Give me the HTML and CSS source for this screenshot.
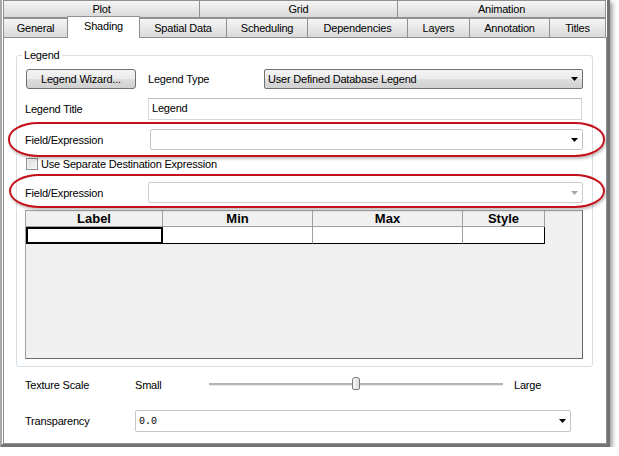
FILE: index.html
```html
<!DOCTYPE html>
<html>
<head>
<meta charset="utf-8">
<link rel="stylesheet" href="styles.css">
</head>
<body>
<div class="window">
  <div class="tabrow tabrow-top">
    <div class="tab w-plot">Plot</div>
    <div class="tab w-grid">Grid</div>
    <div class="tab w-anim">Animation</div>
  </div>
  <div class="tabrow tabrow-bottom">
    <div class="tab w-general">General</div>
    <div class="tab tab-active w-shading">Shading</div>
    <div class="tab w-spatial">Spatial Data</div>
    <div class="tab w-sched">Scheduling</div>
    <div class="tab w-dep">Dependencies</div>
    <div class="tab w-layers">Layers</div>
    <div class="tab w-annot">Annotation</div>
    <div class="tab w-titles">Titles</div>
  </div>
  <div class="panel">
    <fieldset class="group">
      <legend class="group-title">Legend</legend>
      <div class="row row-a">
        <div class="btn">Legend Wizard...</div>
        <span class="lbl-type">Legend Type</span>
        <div class="combo combo-raised"><span class="combo-text">User Defined Database Legend</span><svg class="arrow" width="7" height="4" viewBox="0 0 7 4"><path d="M0 0H7L3.5 4Z" fill="#000"/></svg></div>
      </div>
      <div class="row row-b">
        <span class="lbl lbl-123">Legend Title</span>
        <div class="textbox">Legend</div>
      </div>
      <div class="row row-c">
        <span class="lbl lbl-125">Field/Expression</span>
        <div class="combo combo-flat"><span class="combo-text"></span><svg class="arrow" width="7" height="4" viewBox="0 0 7 4"><path d="M0 0H7L3.5 4Z" fill="#000"/></svg></div>
      </div>
      <div class="row row-d">
        <span class="checkbox"></span>
        <span class="check-text">Use Separate Destination Expression</span>
      </div>
      <div class="row row-e">
        <span class="lbl lbl-123">Field/Expression</span>
        <div class="combo combo-flat combo-disabled"><span class="combo-text"></span><svg class="arrow" width="7" height="4" viewBox="0 0 7 4"><path d="M0 0H7L3.5 4Z" fill="#a6a6a6"/></svg></div>
      </div>
      <div class="grid">
        <div class="ghead">
          <div class="hcell">Label</div>
          <div class="hcell">Min</div>
          <div class="hcell">Max</div>
          <div class="hcell">Style</div>
        </div>
        <div class="grow">
          <div class="cell cell-focus"></div>
          <div class="cell"></div>
          <div class="cell"></div>
          <div class="cell cell-last"></div>
        </div>
      </div>
    </fieldset>

    <div class="row tex-row">
      <span class="lbl lbl-110">Texture Scale</span>
      <span class="small-lbl">Small</span>
      <div class="slider"><span class="thumb"></span></div>
      <span class="large-lbl">Large</span>
    </div>

    <div class="row trans-row">
      <span class="lbl lbl-110">Transparency</span>
      <div class="combo combo-flat combo-trans"><span class="combo-text mono">0.0</span><svg class="arrow" width="7" height="4" viewBox="0 0 7 4"><path d="M0 0H7L3.5 4Z" fill="#000"/></svg></div>
    </div>

    <div class="callout callout-1"></div>
    <div class="callout callout-2"></div>
  </div>
</div>
</body>
</html>
```

FILE: styles.css
```css
html, body {
  margin: 0;
  padding: 0;
  background: #ffffff;
}

body {
  font-family: "Liberation Sans", Arial, sans-serif;
  font-size: 11px;
  letter-spacing: -0.2px;
  color: #000;
}

.window {
  width: 604px;
  height: 444px;
  border-left: 2px solid #a8a8a8;
  padding-left: 1px;
  border-right: 3px solid #737373;
  border-bottom: 3px solid #737373;
  box-shadow: 2px 2px 5px rgba(0, 0, 0, 0.45);
  background: #fff;
}

.tabrow {
  display: flex;
  align-items: flex-start;
}

.tabrow-top {
  height: 18px;
}

.tabrow-bottom {
  height: 19px;
}

.tab {
  box-sizing: border-box;
  flex: none;
  margin-right: -1px;
  border: 1px solid #8e9093;
  background: linear-gradient(#f6f6f6, #e6e6e6 55%, #d9d9d9);
  text-align: center;
  white-space: nowrap;
}

.tabrow-top .tab {
  height: 18px;
  line-height: 16px;
}

.tabrow-bottom .tab {
  height: 19px;
  border-bottom: none;
  line-height: 18px;
}

.tabrow-bottom .tab-active {
  position: relative;
  z-index: 2;
  height: 22px;
  margin-top: -2px;
  margin-bottom: -1px;
  background: #fff;
  line-height: 18px;
}

.w-plot { width: 197px; }
.w-grid { width: 199px; }
.w-anim { width: 209px; }
.w-general { width: 65px; }
.w-shading { width: 73px; }
.w-spatial { width: 88px; }
.w-sched { width: 82px; }
.w-dep { width: 101px; }
.w-layers { width: 63px; }
.w-annot { width: 81px; }
.w-titles { width: 57px; }

.panel {
  position: relative;
  box-sizing: border-box;
  height: 407px;
  border: 1px solid #8e9093;
  padding: 10px 13px 0 12px;
  background: #fff;
}

.group {
  margin: 0;
  min-width: 0;
  border: 1px solid #d5dfe5;
  border-radius: 3px;
  padding: 0 9px 7px 8px;
}

.group-title {
  padding: 0 2px;
  margin-left: -3px;
  line-height: 14px;
}

.row {
  display: flex;
  align-items: center;
}

.row-a {
  margin-top: 6px;
  height: 21px;
}

.btn {
  box-sizing: border-box;
  margin-left: 1px;
  width: 110px;
  height: 20px;
  border: 1px solid #707070;
  border-radius: 3px;
  background: linear-gradient(#f3f3f3, #ebebeb 50%, #dddddd 51%, #d0d0d0);
  text-align: center;
  line-height: 18px;
}

.lbl-type {
  margin-left: 12px;
  width: 116px;
  flex: none;
}

.combo {
  box-sizing: border-box;
  flex: 1;
  display: flex;
  align-items: center;
  border-radius: 2px;
  padding: 0 4px 0 3px;
}

.combo-text {
  flex: 1;
  white-space: nowrap;
}

.arrow {
  flex: none;
  display: block;
}

.combo-raised {
  height: 20px;
  border: 1px solid #707070;
  background: linear-gradient(#f3f3f3, #ebebeb 50%, #dddddd 51%, #d0d0d0);
}

.combo-flat {
  height: 21px;
  border: 1px solid #c5c5c5;
  background: #fff;
}

.combo-disabled {
  border-color: #cccccc;
}

.lbl {
  flex: none;
  white-space: nowrap;
}

.lbl-123 { width: 123px; }
.lbl-125 { width: 125px; }
.lbl-110 { width: 110px; }

.row-b {
  margin-top: 9px;
  align-items: center;
}

.textbox {
  box-sizing: border-box;
  flex: 1;
  height: 22px;
  margin-right: 1px;
  border: 1px solid #d3d7dc;
  border-top-color: #b9bdc2;
  padding: 2px 3px 0;
  line-height: 14px;
  background: #fff;
}

.row-c {
  margin-top: 9px;
}

.row-d {
  margin-top: 8px;
  height: 12px;
}

.checkbox {
  box-sizing: border-box;
  flex: none;
  margin-left: 1px;
  width: 12px;
  height: 12px;
  border: 1px solid #8e8f8f;
  background: linear-gradient(135deg, #dcdcdc, #f7f7f7);
  box-shadow: inset 0 0 0 1px #f4f4f4;
}

.check-text {
  margin-left: 3px;
  white-space: nowrap;
}

.row-e {
  margin-top: 12px;
}

.grid {
  box-sizing: border-box;
  margin-top: 7px;
  height: 149px;
  border: 1px solid;
  border-color: #a0a0a0 #696969 #696969 #a0a0a0;
  background: #f0f0f0;
}

.ghead,
.grow {
  display: grid;
  grid-template-columns: 137px 150px 150px 82px;
}

.hcell {
  box-sizing: border-box;
  height: 16px;
  border-right: 1px solid #a0a0a0;
  border-bottom: 1px solid #a0a0a0;
  font-size: 13px;
  font-weight: bold;
  letter-spacing: 0;
  line-height: 15px;
  text-align: center;
  background: #f0f0f0;
}

.cell {
  box-sizing: border-box;
  height: 17px;
  border-right: 1px solid #a0a0a0;
  border-bottom: 1px solid #000;
  background: #fff;
}

.cell-focus {
  border: 1px solid #000;
  box-shadow: inset 0 0 0 1px #000;
}

.cell-last {
  border-right-color: #000;
}

.tex-row {
  margin-top: 10px;
  height: 16px;
  padding-left: 9px;
}

.small-lbl {
  flex: none;
  width: 74px;
}

.slider {
  position: relative;
  flex: none;
  width: 294px;
  height: 2px;
  margin-top: -2px;
  background: #b4b4b4;
  border-bottom: 1px solid #e8e8e8;
}

.thumb {
  position: absolute;
  left: 143px;
  top: -6px;
  box-sizing: border-box;
  width: 8px;
  height: 13px;
  border: 1px solid #7c7c7c;
  border-radius: 3px 3px 2px 2px;
  background: linear-gradient(90deg, #f7f7f7, #dcdcdc);
}

.large-lbl {
  margin-left: 11px;
}

.trans-row {
  margin-top: 17px;
  padding-left: 9px;
}

.combo-trans {
  flex: none;
  width: 436px;
  height: 22px;
}

.mono {
  font-family: "Liberation Mono", "Courier New", monospace;
  font-size: 10px;
  letter-spacing: 0;
}

.callout {
  position: absolute;
  box-sizing: border-box;
  border: 2px solid #c3121c;
  border-radius: 30px / 17px;
  box-shadow: 1px 2px 3px rgba(0, 0, 0, 0.25);
}

.callout-1 {
  left: 4px;
  top: 84px;
  width: 597px;
  height: 35px;
}

.callout-2 {
  left: 5px;
  top: 136px;
  width: 596px;
  height: 34px;
}
```
